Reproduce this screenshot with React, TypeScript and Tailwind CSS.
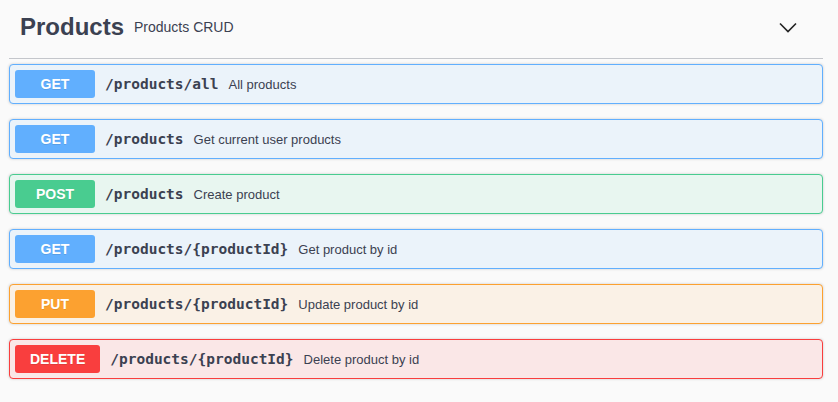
import React from "react";

type Op = {
  method: "GET" | "POST" | "PUT" | "DELETE";
  path: string;
  summary: string;
};

const OPS: Op[] = [
  { method: "GET", path: "/products/all", summary: "All products" },
  { method: "GET", path: "/products", summary: "Get current user products" },
  { method: "POST", path: "/products", summary: "Create product" },
  { method: "GET", path: "/products/{productId}", summary: "Get product by id" },
  { method: "PUT", path: "/products/{productId}", summary: "Update product by id" },
  { method: "DELETE", path: "/products/{productId}", summary: "Delete product by id" },
];

const ROW_CLS: Record<Op["method"], string> = {
  GET: "border-[#61affe] bg-[#ebf3fa]",
  POST: "border-[#49cc90] bg-[#e8f6f0]",
  PUT: "border-[#fca130] bg-[#faf1e6]",
  DELETE: "border-[#f93e3e] bg-[#fae7e7]",
};

const BADGE_CLS: Record<Op["method"], string> = {
  GET: "bg-[#61affe]",
  POST: "bg-[#49cc90]",
  PUT: "bg-[#fca130]",
  DELETE: "bg-[#f93e3e]",
};

function OpRow({ op }: { op: Op }) {
  return (
    <div
      className={`flex items-center h-[40px] p-[5px] border rounded-[4px] shadow-[0_0_3px_rgba(0,0,0,0.19)] mb-[15px] ${ROW_CLS[op.method]}`}
    >
      {/* Method badge */}
      <span
        className={`h-[28px] min-w-[80px] px-[15px] pt-[1px] flex items-center justify-center rounded-[3px] text-white text-[14px] font-bold [text-shadow:0_1px_0_rgba(0,0,0,0.1)] ${BADGE_CLS[op.method]}`}
      >
        {op.method}
      </span>
      <span className="px-[10px] pt-[2px] text-[14.5px] font-bold text-[#3b4151] font-['DejaVu_Sans_Mono',monospace]">
        {op.path}
      </span>
      <span className="pt-[1px] text-[13px] text-[#3b4151]">{op.summary}</span>
    </div>
  );
}

export default function App() {
  return (
    <div className="min-h-[402px] w-[838px] bg-[#fafafa] font-['Liberation_Sans',Arial,sans-serif] pl-[9px] pr-[15px]">
      {/* Tag header */}
      <div className="flex items-center h-[59px] pb-[4px] pl-[11px] pr-[26px] border-b border-[#c4c6cb] mb-[5px]">
        <span className="text-[24px] font-bold text-[#3b4151]">Products</span>
        <span className="ml-[10px] text-[14px] text-[#3b4151]">Products CRUD</span>
        <svg className="ml-auto" width="18" height="11" viewBox="0 0 18 11" fill="none">
          <polyline points="1,1.5 9,9.5 17,1.5" stroke="#222" strokeWidth="1.6" />
        </svg>
      </div>

      {OPS.map((op, i) => (
        <OpRow key={i} op={op} />
      ))}
    </div>
  );
}
